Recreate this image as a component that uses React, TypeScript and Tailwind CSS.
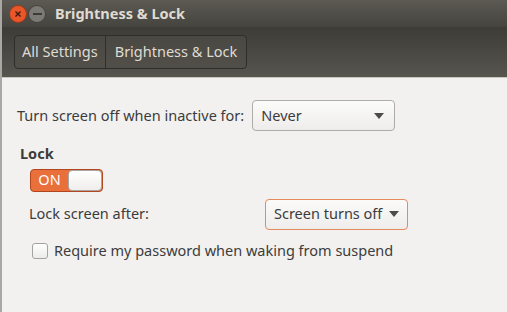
import React from "react";

const font = { fontFamily: '"Noto Sans", "Open Sans", "DejaVu Sans", sans-serif' };

function Arrow() {
  return (
    <svg width="10" height="6" viewBox="0 0 10 6">
      <path d="M0 0 L10 0 L5 6 Z" fill="#4c4c4c" />
    </svg>
  );
}

export default function App() {
  return (
    <div
      className="w-[507px] h-[312px] flex flex-col bg-[#f2f1f0] overflow-hidden border-l-2 border-[#a9a8a4]"
      style={font}
    >
      {/* title bar */}
      <div className="h-[27px] flex items-center bg-gradient-to-b from-[#5c5a53] to-[#46443f] pl-[7px]">
        <div className="w-[18px] h-[18px] rounded-full bg-[#e9562a] border border-[#9c3a1c] flex items-center justify-center">
          <svg width="8" height="8" viewBox="0 0 8 8">
            <path d="M1.5 1.5 L6.5 6.5 M6.5 1.5 L1.5 6.5" stroke="#3a1a0e" strokeWidth="1.4" />
          </svg>
        </div>
        <div className="ml-[1px] w-[18px] h-[18px] rounded-full bg-[#7c7a74] border border-[#45433e] flex items-center justify-center">
          <div className="w-[9px] h-[2px] bg-[#3c3b37]" />
        </div>
        <div className="ml-[9px] text-[14.5px] font-bold text-[#dfdbd2] leading-none">Brightness &amp; Lock</div>
      </div>
      {/* toolbar */}
      <div className="h-[51px] flex items-center bg-gradient-to-b from-[#3d3c37] to-[#57554e] pl-[12px] border-b border-[#c9c7c2]">
        <div className="h-[34px] flex items-stretch rounded-[4px] border border-[#2f2e2a] bg-gradient-to-b from-[#4a4843] to-[#524f49] text-[14.5px] text-[#dfdbd2]">
          <div className="flex items-center px-[7px] border-r border-[#2f2e2a]">All Settings</div>
          <div className="flex items-center px-[9px]">Brightness &amp; Lock</div>
        </div>
      </div>
      {/* content */}
      <div className="flex flex-col text-[14.5px] text-[#3c3c3c]">
        <div className="flex items-center mt-[22px] pl-[15px]">
          <span>Turn screen off when inactive for:</span>
          <div className="ml-[8px] w-[143px] h-[31px] rounded-[4px] border border-[#aeaca8] bg-gradient-to-b from-[#fbfbfa] to-[#eeedeb] flex items-center justify-between pl-[8px] pr-[10px]">
            <span>Never</span>
            <Arrow />
          </div>
        </div>
        <div className="mt-[12px] pl-[18px] font-bold">Lock</div>
        <div className="mt-[4px] ml-[28px] w-[73px] h-[23px] rounded-[4px] border border-[#b2461e] bg-[#e9703b] flex items-stretch">
          <div className="w-[37px] flex items-center justify-center text-white text-[14.5px]">ON</div>
          <div className="flex-1 rounded-[4px] border border-[#a9a7a3] bg-gradient-to-b from-[#ffffff] to-[#efeeec]" />
        </div>
        <div className="flex items-center mt-[7px] pl-[27px]">
          <span className="w-[236px]">Lock screen after:</span>
          <div className="w-[143px] h-[31px] rounded-[4px] border border-[#e58a5c] bg-gradient-to-b from-[#fbfbfa] to-[#eeedeb] flex items-center justify-between pl-[8px] pr-[8px]">
            <span>Screen turns off</span>
            <Arrow />
          </div>
        </div>
        <div className="flex items-center mt-[10px] pl-[30px]">
          <div className="w-[16px] h-[16px] rounded-[3px] border border-[#a5a3a0] bg-gradient-to-b from-[#ffffff] to-[#ecebea]" />
          <span className="ml-[6px]">Require my password when waking from suspend</span>
        </div>
      </div>
    </div>
  );
}
